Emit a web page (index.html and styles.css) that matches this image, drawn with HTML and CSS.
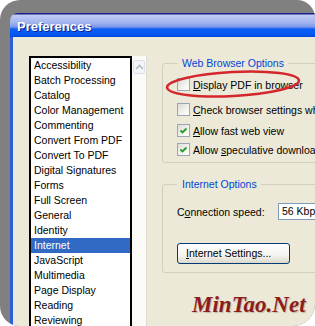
FILE: index.html
```html
<!DOCTYPE html>
<html lang="en">
  <head>
    <meta charset="UTF-8" />
    <title>Preferences</title>
    <link rel="stylesheet" href="styles.css">
  </head>
  <body>
    <div class="frame">
      <div class="window">
        <div class="titlebar">Preferences</div>
        <div class="client">
          <ul class="list">
            <li>Accessibility</li>
            <li>Batch Processing</li>
            <li>Catalog</li>
            <li>Color Management</li>
            <li>Commenting</li>
            <li>Convert From PDF</li>
            <li>Convert To PDF</li>
            <li>Digital Signatures</li>
            <li>Forms</li>
            <li>Full Screen</li>
            <li>General</li>
            <li>Identity</li>
            <li class="selected">Internet</li>
            <li>JavaScript</li>
            <li>Multimedia</li>
            <li>Page Display</li>
            <li>Reading</li>
            <li>Reviewing</li>
          </ul>
          <div class="scrollbar">
            <div class="scroll-up">
              <svg width="9" height="6" viewBox="0 0 9 6"><polyline points="1,5 4.5,1.5 8,5" fill="none" stroke="#b4bac8" stroke-width="1.6"/></svg>
            </div>
          </div>
          <div class="panel">
            <fieldset class="group web">
              <legend>Web Browser Options</legend>
              <div class="check row1"><span class="box"></span><span><u>D</u>isplay PDF in browser</span></div>
              <div class="check row2"><span class="box"></span><span><u>C</u>heck browser settings when starting Reader</span></div>
              <div class="check row3"><span class="box"><svg width="11" height="11" viewBox="0 0 11 11"><polyline points="2.5,5.5 4.5,7.5 8.5,3.5" fill="none" stroke="#21a121" stroke-width="1.8"/></svg></span><span><u>A</u>llow fast web view</span></div>
              <div class="check row4"><span class="box"><svg width="11" height="11" viewBox="0 0 11 11"><polyline points="2.5,5.5 4.5,7.5 8.5,3.5" fill="none" stroke="#21a121" stroke-width="1.8"/></svg></span><span>Allow <u>s</u>peculative downloading in the background</span></div>
            </fieldset>
            <fieldset class="group inet">
              <legend>Internet Options</legend>
              <div class="speed-row">
                <span class="speed-label">C<u>o</u>nnection speed:</span>
                <div class="select">56 Kbps</div>
              </div>
              <div class="button"><u>I</u>nternet Settings...</div>
            </fieldset>
            <div class="watermark">MinTao.Net</div>
          </div>
        </div>
      </div>
      <svg class="mark" width="144" height="34" viewBox="0 0 144 34">
        <ellipse cx="71" cy="17" rx="66" ry="12" transform="rotate(-3 71 17)" fill="none" stroke="#d4262c" stroke-width="2.6"/>
      </svg>
    </div>
  </body>
</html>
```
FILE: styles.css
```css
body {
  margin: 0;
  background: #fff;
  font-family: "Liberation Sans", Arial, sans-serif;
}
.frame {
  position: relative;
  width: 315px;
  height: 326px;
  box-sizing: border-box;
  padding: 13px 0 0 10px;
  background: #808080;
  border-radius: 20px 18px 22px 20px;
  overflow: hidden;
}
.window {
  width: 420px;
}
.titlebar {
  height: 24px;
  box-sizing: border-box;
  padding-left: 7px;
  border-radius: 8px 8px 0 0;
  background: linear-gradient(#16238c 0, #16238c 1px, #c2cdf4 2px, #9fb3ef 10px, #7a96ea 14px, #0c5df4 16px, #0559f2 21px, #0349dc 24px);
  color: #fff;
  font-weight: bold;
  font-size: 13px;
  line-height: 27px;
  text-shadow: 1px 1px #0b2290;
}
.client {
  display: flex;
  height: 300px;
  padding-left: 16px;
  background: #ece9d8;
  border-left: 3px solid #2b5fd9;
}
.list {
  flex-shrink: 0;
  align-self: flex-start;
  width: 99px;
  margin: 19px 0 0;
  padding: 0;
  list-style: none;
  background: #fff;
  border: 2px solid #000;
  font-size: 10.5px;
  color: #000;
}
.list li {
  height: 15px;
  line-height: 15px;
  padding-left: 3px;
  white-space: nowrap;
  overflow: hidden;
}
.list li.selected {
  background: #316ac5;
  color: #fff;
}
.scrollbar {
  flex-shrink: 0;
  width: 14px;
  margin-top: 19px;
  background: #fafaf6;
  border-right: 1px solid #dedcd0;
}
.scroll-up {
  display: flex;
  align-items: center;
  justify-content: center;
  height: 12px;
  margin: 4px 1px 0;
  background: #f3f4f8;
  border: 1px solid #dde0ea;
  border-radius: 2px;
}
.panel {
  flex-shrink: 0;
  margin: 20px 0 0 15px;
  font-size: 10.5px;
}
.group {
  width: 200px;
  margin: 0;
  padding: 0 0 0 14px;
  border: 1px solid #d0d0bf;
  border-radius: 3px;
}
.group legend {
  padding: 0 4px 0 5px;
  line-height: 12px;
  color: #0046d5;
}
.web {
  padding-bottom: 6px;
}
.check {
  display: flex;
  align-items: center;
  gap: 3px;
  height: 13px;
  white-space: nowrap;
}
.row1 { margin-top: 9px; }
.row2 { margin-top: 12px; }
.row3 { margin-top: 8px; }
.row4 { margin-top: 6px; }
.box {
  flex-shrink: 0;
  display: flex;
  align-items: center;
  justify-content: center;
  width: 11px;
  height: 11px;
  border: 1px solid #9aa6b8;
  background: linear-gradient(135deg, #dcdcd6, #f6f6f3 70%, #fff);
}
.inet {
  margin-top: 15px;
  padding-bottom: 8px;
}
.speed-row {
  display: flex;
  align-items: center;
  margin-top: 13px;
  height: 17px;
  white-space: nowrap;
}
.speed-label {
  flex-shrink: 0;
  width: 101px;
}
.select {
  flex-shrink: 0;
  width: 60px;
  height: 15px;
  padding-left: 3px;
  line-height: 15px;
  background: #fff;
  border: 1px solid #7f9db9;
}
.button {
  width: 103px;
  height: 19px;
  margin-top: 23px;
  padding-left: 8px;
  line-height: 19px;
  border: 1px solid #003c74;
  border-radius: 3px;
  background: linear-gradient(#fff, #f4f3ee 60%, #dcd8cc);
}
.watermark {
  margin: 18px 0 0 30px;
  font-family: "Liberation Serif", serif;
  font-style: italic;
  font-weight: bold;
  font-size: 23px;
  line-height: 28px;
  color: #8b1d1d;
  text-shadow: 1px 1px 1px #c9b8a6;
}
.mark {
  position: absolute;
  left: 162px;
  top: 67px;
}
```
